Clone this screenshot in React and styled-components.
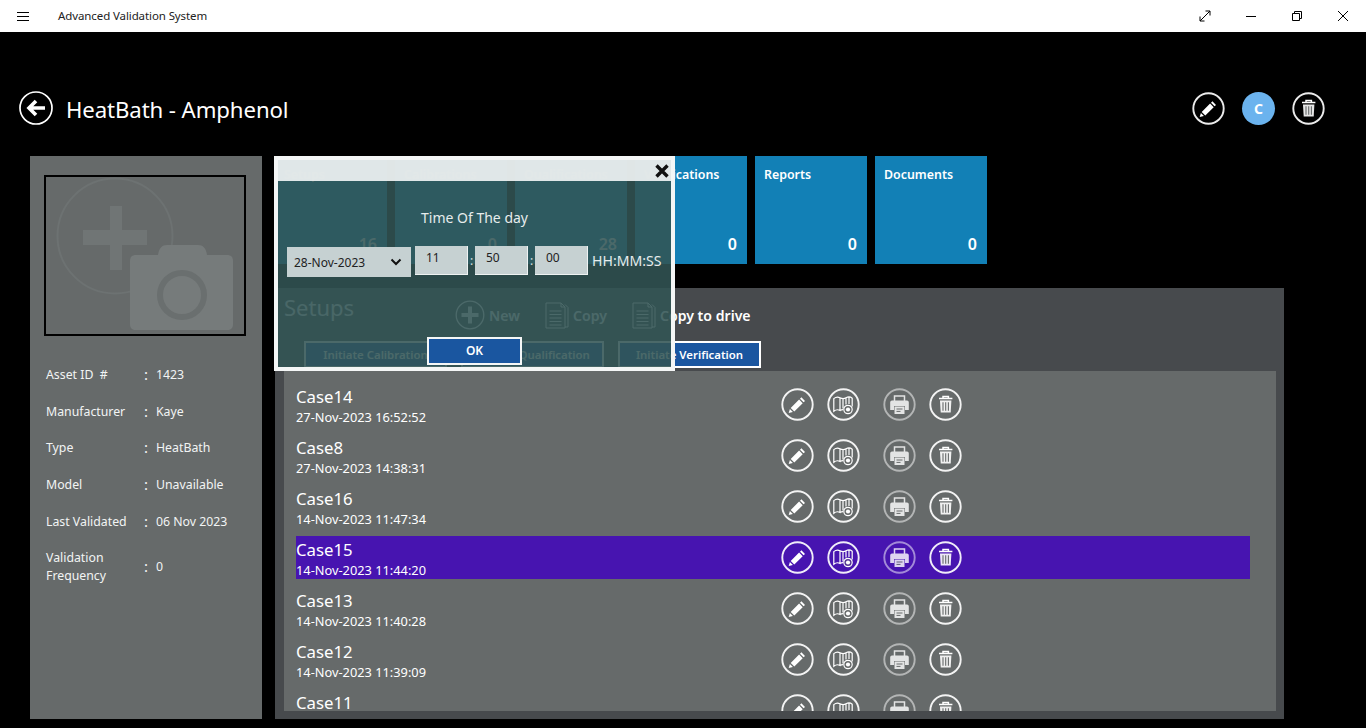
import React from 'react';
import styled, { createGlobalStyle } from 'styled-components';

const FONT = `'Noto Sans', 'Open Sans', sans-serif`;

const GlobalStyle = createGlobalStyle`
    html, body {
        margin: 0;
        padding: 0;
        background: black;
    }
    * {
        box-sizing: border-box;
    }
`;

const assetInfo = [
    ['Asset ID  #', '1423'],
    ['Manufacturer', 'Kaye'],
    ['Type', 'HeatBath'],
    ['Model', 'Unavailable'],
    ['Last Validated', '06 Nov 2023'],
    ['Validation Frequency', '0'],
];

const tiles = [
    ['Setups', 16],
    ['Calibrations', 0],
    ['Qualifications', 28],
    ['Verifications', 0],
    ['Reports', 0],
    ['Documents', 0],
];

const cases = [
    ['Case14', '27-Nov-2023 16:52:52'],
    ['Case8', '27-Nov-2023 14:38:31'],
    ['Case16', '14-Nov-2023 11:47:34'],
    ['Case15', '14-Nov-2023 11:44:20', true],
    ['Case13', '14-Nov-2023 11:40:28'],
    ['Case12', '14-Nov-2023 11:39:09'],
    ['Case11', '14-Nov-2023 11:37:51'],
];

const Ring = ({ dim }) => (
    <circle cx="16.5" cy="16.5" r="15.2" fill="none" stroke="white" strokeWidth="1.9" strokeOpacity={dim ? 0.5 : 0.92} />
);

const BackIcon = () => (
    <IconSvg viewBox="0 0 34 34" width="34" height="34">
        <circle cx="17" cy="17" r="16" fill="none" stroke="white" strokeWidth="1.7" />
        <path d="M26 17H11M17 10l-7 7 7 7" fill="none" stroke="white" strokeWidth="3.6" />
    </IconSvg>
);

const EditIcon = () => (
    <IconSvg viewBox="0 0 33 33" width="33" height="33">
        <Ring />
        <path fill="white" d="M20.4 9.3l3.6 3.6-1.4 1.4-3.6-3.6zM18.1 11.6l3.6 3.6-8.4 8.4-3.6-3.6zM8.9 20.9l3 3-4.2 1.2z" />
    </IconSvg>
);

const MapIcon = () => (
    <IconSvg viewBox="0 0 33 33" width="33" height="33">
        <Ring />
        <path
            d="M6.8 10.6c2-1.6 4.2-1.8 6.2-.8v12.6c-2-1-4.2-.8-6.2.8zM13 9.8c2 1 4 1.2 6 0 2.2-1.2 4.2-1.2 6.2.4v8.4M13 22.4c1-.5 2-.7 3-.7M19 9.8v6.6M16 10.4v10M22 9.4v6.6"
            fill="none"
            stroke="white"
            strokeWidth="1.2"
        />
        <circle cx="21" cy="21.5" r="4.2" fill="#666a6a" fillOpacity="0.4" stroke="white" strokeWidth="1.2" />
        <circle cx="21" cy="21.5" r="2.1" fill="white" />
    </IconSvg>
);

const PrintIcon = () => (
    <IconSvg viewBox="0 0 33 33" width="33" height="33">
        <Ring dim />
        <g opacity="0.82">
            <path d="M11.5 13V8h10v5" fill="none" stroke="white" strokeWidth="1.5" />
            <path fill="white" d="M9 12.5h15a1.8 1.8 0 0 1 1.8 1.8V22H22v-4H11v4H7.2v-7.7A1.8 1.8 0 0 1 9 12.5z" />
            <path fill="white" d="M11.5 18.5h10v7.5h-10z" />
            <path d="M13.5 21h6M13.5 23.4h4" stroke="#666a6a" strokeWidth="1" />
        </g>
    </IconSvg>
);

const TrashIcon = () => (
    <IconSvg viewBox="0 0 33 33" width="33" height="33">
        <Ring />
        <path d="M10 10.5h13.4M14 10V8.6h5.4V10" fill="none" stroke="white" strokeWidth="1.5" />
        <path fill="white" fillOpacity="0.9" d="M11 12.4h11.4l-.7 12.1H11.7z" />
        <path d="M14 14.2v8.6M16.7 14.2v8.6M19.4 14.2v8.6" stroke="#666a6a" strokeWidth="1.1" />
    </IconSvg>
);

const PlusCircleIcon = () => (
    <IconSvg viewBox="0 0 30 30" width="30" height="30">
        <circle cx="15" cy="15" r="13.8" fill="none" stroke="white" strokeWidth="1.3" />
        <path d="M15 6.5v17M6.5 15h17" stroke="white" strokeWidth="4" />
    </IconSvg>
);

const DocIcon = () => (
    <IconSvg viewBox="0 0 24 27" width="24" height="27">
        <path
            d="M1 1h15l4 4v21H1zM16 1v4h4M20 2.5l3 3V25h-3M4.5 9h12M4.5 12.5h12M4.5 16h12M4.5 19.5h12M4.5 23h12"
            fill="none"
            stroke="white"
            strokeWidth="1"
        />
    </IconSvg>
);

const PhotoPlaceholder = () => (
    <svg viewBox="0 0 198 157" width="198" height="157">
        <circle cx="69" cy="59" r="57.5" fill="none" stroke="#6d7272" strokeWidth="2" />
        <path d="M37 53h27V29h12v24h25v15H76v25H64V68H37z" fill="#707575" />
        <path
            d="M90 78h22c1-7 4-10 9-10h31c5 0 8 3 9 10h20c4 0 6 2 6 6v63c0 4-2 6-6 6H90c-4 0-6-2-6-6V84c0-4 2-6 6-6z"
            fill="#767b7b"
        />
        <circle cx="136" cy="118" r="22" fill="none" stroke="#6a6f6f" strokeWidth="6" />
    </svg>
);

export default function App() {
    return (
        <Page>
            <GlobalStyle />
            <TitleBar>
                <MenuButton>
                    <svg viewBox="0 0 12 9" width="12" height="9">
                        <path d="M0 .5h12M0 4.5h12M0 8.5h12" stroke="black" strokeWidth="1" />
                    </svg>
                </MenuButton>
                <AppName>Advanced Validation System</AppName>
                <WindowButtons>
                    <WindowButton>
                        <svg viewBox="0 0 12 12" width="12" height="12">
                            <path d="M1 11L11 1M6.5 1H11v4.5M1 6.5V11h4.5" fill="none" stroke="black" strokeWidth="1" />
                        </svg>
                    </WindowButton>
                    <WindowButton>
                        <svg viewBox="0 0 10 10" width="10" height="10">
                            <path d="M0 5.5h10" stroke="black" strokeWidth="1" />
                        </svg>
                    </WindowButton>
                    <WindowButton>
                        <svg viewBox="0 0 10 10" width="10" height="10">
                            <path d="M.5 2.5h7v7h-7zM2.5 2.5v-2h7v7h-2" fill="none" stroke="black" strokeWidth="1" />
                        </svg>
                    </WindowButton>
                    <WindowButton>
                        <svg viewBox="0 0 10 10" width="10" height="10">
                            <path d="M0 0l10 10M10 0L0 10" stroke="black" strokeWidth="1" />
                        </svg>
                    </WindowButton>
                </WindowButtons>
            </TitleBar>

            <Header>
                <BackIcon />
                <Heading>HeatBath - Amphenol</Heading>
                <HeaderActions>
                    <EditIcon />
                    <Avatar>C</Avatar>
                    <TrashIcon />
                </HeaderActions>
            </Header>

            <Content>
                <AssetPanel>
                    <PhotoBox>
                        <PhotoPlaceholder />
                    </PhotoBox>
                    <InfoGrid>
                        {assetInfo.map(([label, value]) => (
                            <React.Fragment key={label}>
                                <InfoLabel>{label}</InfoLabel>
                                <InfoColon>:</InfoColon>
                                <InfoValue>{value}</InfoValue>
                            </React.Fragment>
                        ))}
                    </InfoGrid>
                </AssetPanel>

                <MainColumn>
                    <TileRow>
                        {tiles.map(([label, value]) => (
                            <Tile key={label}>
                                <TileLabel>{label}</TileLabel>
                                <TileValue>{value}</TileValue>
                            </Tile>
                        ))}
                    </TileRow>

                    <SetupsPanel>
                        <SetupsToolbar>
                            <SetupsTitle>Setups</SetupsTitle>
                            <ToolbarItem $width={90}>
                                <PlusCircleIcon />
                                New
                            </ToolbarItem>
                            <ToolbarItem $width={87}>
                                <DocIcon />
                                Copy
                            </ToolbarItem>
                            <ToolbarItem>
                                <DocIcon />
                                Copy to drive
                            </ToolbarItem>
                        </SetupsToolbar>
                        <InitiateRow>
                            <InitiateButton>Initiate Calibration</InitiateButton>
                            <InitiateButton>Initiate Qualification</InitiateButton>
                            <InitiateButton>Initiate Verification</InitiateButton>
                        </InitiateRow>
                        <CaseList>
                            {cases.map(([name, date, selected]) => (
                                <CaseRow key={name} $selected={selected}>
                                    <CaseText>
                                        <CaseName>{name}</CaseName>
                                        <CaseDate>{date}</CaseDate>
                                    </CaseText>
                                    <CaseActions>
                                        <EditIcon />
                                        <MapIcon />
                                    </CaseActions>
                                    <CaseActions>
                                        <PrintIcon />
                                        <TrashIcon />
                                    </CaseActions>
                                </CaseRow>
                            ))}
                        </CaseList>
                    </SetupsPanel>
                </MainColumn>
            </Content>

            <Dialog>
                <DialogTop>
                    <svg viewBox="0 0 14 14" width="14" height="14">
                        <path d="M1.5 1.5l11 11M12.5 1.5l-11 11" stroke="#111" strokeWidth="3.4" />
                    </svg>
                </DialogTop>
                <DialogTitle>Time Of The day</DialogTitle>
                <TimeRow>
                    <DateField>
                        28-Nov-2023
                        <svg viewBox="0 0 12 8" width="12" height="8">
                            <path d="M1.5 1.5L6 6l4.5-4.5" fill="none" stroke="#111" strokeWidth="2" />
                        </svg>
                    </DateField>
                    <TimeField value="11" readOnly />
                    <TimeColon>:</TimeColon>
                    <TimeField value="50" readOnly />
                    <TimeColon>:</TimeColon>
                    <TimeField value="00" readOnly />
                    <TimeHint>HH:MM:SS</TimeHint>
                </TimeRow>
                <OkButton>OK</OkButton>
            </Dialog>
        </Page>
    );
}

const Page = styled.div`
    position: relative;
    display: flex;
    flex-direction: column;
    width: 1366px;
    height: 728px;
    overflow: hidden;
    background: black;
    color: white;
    font-family: ${FONT};
`;

const IconSvg = styled.svg`
    display: block;
    flex: none;
`;

const TitleBar = styled.div`
    display: flex;
    align-items: center;
    height: 32px;
    flex: none;
    background: white;
    color: #222;
`;

const MenuButton = styled.div`
    display: flex;
    width: 58px;
    padding-left: 17px;
`;

const AppName = styled.div`
    margin-top: -1px;
    font-size: 11.5px;
    letter-spacing: -0.1px;
`;

const WindowButtons = styled.div`
    display: flex;
    margin-left: auto;
`;

const WindowButton = styled.div`
    display: flex;
    align-items: center;
    justify-content: center;
    width: 46px;
    height: 32px;
`;

const Header = styled.div`
    display: flex;
    align-items: center;
    height: 124px;
    flex: none;
    padding: 28px 41px 0 19px;
`;

const Heading = styled.h1`
    margin: 2px 0 0 13px;
    font-size: 22.2px;
    font-weight: 400;
    letter-spacing: -0.1px;
`;

const HeaderActions = styled.div`
    display: flex;
    align-items: center;
    gap: 17px;
    margin-left: auto;
`;

const Avatar = styled.div`
    display: flex;
    align-items: center;
    justify-content: center;
    width: 33px;
    height: 33px;
    border-radius: 50%;
    background: #6bb3ee;
    font-size: 14px;
    font-weight: 700;
`;

const Content = styled.div`
    display: flex;
    gap: 13px;
    height: 563px;
    padding-left: 30px;
`;

const AssetPanel = styled.div`
    width: 232px;
    padding: 19px 14px 0;
    background: #666a6a;
`;

const PhotoBox = styled.div`
    width: 202px;
    height: 161px;
    border: 2px solid black;
`;

const InfoGrid = styled.div`
    display: grid;
    grid-template-columns: 98px 12px 1fr;
    row-gap: 18.7px;
    align-items: center;
    margin: 30px 0 0 2px;
    font-size: 12.3px;
    line-height: 18px;
    color: #f2f4f4;
`;

const InfoLabel = styled.div`
    white-space: pre-wrap;
`;

const InfoColon = styled.div`
    font-size: 15px;
    margin-top: -2px;
`;

const InfoValue = styled.div``;

const MainColumn = styled.div`
    display: flex;
    flex-direction: column;
    width: 1009px;
`;

const TileRow = styled.div`
    display: flex;
    gap: 8px;
    height: 108px;
`;

const Tile = styled.div`
    display: flex;
    flex-direction: column;
    justify-content: space-between;
    width: 112px;
    padding: 10px 10px 9px 9px;
    background: #1280b6;
`;

const TileLabel = styled.div`
    font-size: 12.4px;
    font-weight: 600;
`;

const TileValue = styled.div`
    align-self: flex-end;
    font-size: 16px;
    font-weight: 600;
`;

const SetupsPanel = styled.div`
    display: flex;
    flex-direction: column;
    height: 431px;
    margin-top: 24px;
    background: #474a4d;
`;

const SetupsToolbar = styled.div`
    display: flex;
    align-items: center;
    height: 53px;
    padding-left: 9px;
`;

const SetupsTitle = styled.div`
    width: 171px;
    margin-top: -15px;
    font-size: 22px;
    color: #e8ecec;
`;

const ToolbarItem = styled.div`
    display: flex;
    align-items: center;
    gap: 4px;
    width: ${props => (props.$width ? `${props.$width}px` : 'auto')};
    padding-top: 1px;
    font-size: 14.1px;
    font-weight: 600;
`;

const InitiateRow = styled.div`
    display: flex;
    gap: 14px;
    height: 30px;
    padding-left: 29px;
`;

const InitiateButton = styled.div`
    display: flex;
    align-items: center;
    justify-content: center;
    width: 143px;
    height: 27px;
    border: 2px solid white;
    background: #1a56a0;
    font-size: 11.4px;
    font-weight: 600;
`;

const CaseList = styled.div`
    display: flex;
    flex-direction: column;
    gap: 8px;
    height: 340px;
    margin: 0 8px 0 9px;
    padding: 12px 26px 0 12px;
    overflow: hidden;
    background: #666a6a;
`;

const CaseRow = styled.div`
    display: flex;
    align-items: center;
    height: 43px;
    flex: none;
    background: ${props => (props.$selected ? '#4714b0' : 'transparent')};
`;

const CaseText = styled.div`
    width: 485px;
    padding-top: 2px;
`;

const CaseName = styled.div`
    font-size: 16.8px;
    line-height: 24px;
`;

const CaseDate = styled.div`
    font-size: 12.8px;
    line-height: 17px;
`;

const CaseActions = styled.div`
    display: flex;
    gap: 13px;
    width: 102px;
`;

const Dialog = styled.div`
    position: absolute;
    left: 274px;
    top: 156px;
    display: flex;
    flex-direction: column;
    width: 401px;
    height: 215px;
    border: 4px solid #f4f6f6;
    background: rgba(50, 84, 84, 0.88);
`;

const DialogTop = styled.div`
    display: flex;
    align-items: center;
    justify-content: flex-end;
    height: 21px;
    flex: none;
    padding-right: 2px;
    background: rgba(236, 240, 240, 0.94);
`;

const DialogTitle = styled.div`
    margin-top: 27px;
    text-align: center;
    font-size: 14px;
    line-height: 20px;
    color: #e6ecec;
`;

const TimeRow = styled.div`
    display: flex;
    align-items: flex-start;
    margin-top: 18px;
    padding-left: 9px;
    font-size: 12px;
    color: #222;
`;

const DateField = styled.div`
    display: flex;
    align-items: center;
    justify-content: space-between;
    width: 124px;
    height: 30px;
    margin: 1px 4px 0 0;
    padding: 0 9px 0 7px;
    background: #c6d1d2;
`;

const TimeField = styled.input`
    width: 53px;
    height: 29px;
    padding: 0 0 5px 11px;
    border: none;
    border-right: 1px solid #eef2f2;
    border-bottom: 1px solid #eef2f2;
    border-radius: 0;
    outline: none;
    background: #c6d1d2;
    color: #222;
    font-family: ${FONT};
    font-size: 12px;
`;

const TimeColon = styled.div`
    width: 7px;
    line-height: 29px;
    text-align: center;
    color: #d8e0e0;
`;

const TimeHint = styled.div`
    margin: 5px 0 0 4px;
    font-size: 14.1px;
    line-height: 20px;
    color: #e6ecec;
`;

const OkButton = styled.div`
    display: flex;
    align-items: center;
    justify-content: center;
    align-self: center;
    width: 95px;
    height: 28px;
    margin-top: auto;
    margin-bottom: 2px;
    padding-bottom: 2px;
    border: 2px solid #f4f6f6;
    background: #1a56a0;
    font-size: 12px;
    font-weight: 600;
`;
